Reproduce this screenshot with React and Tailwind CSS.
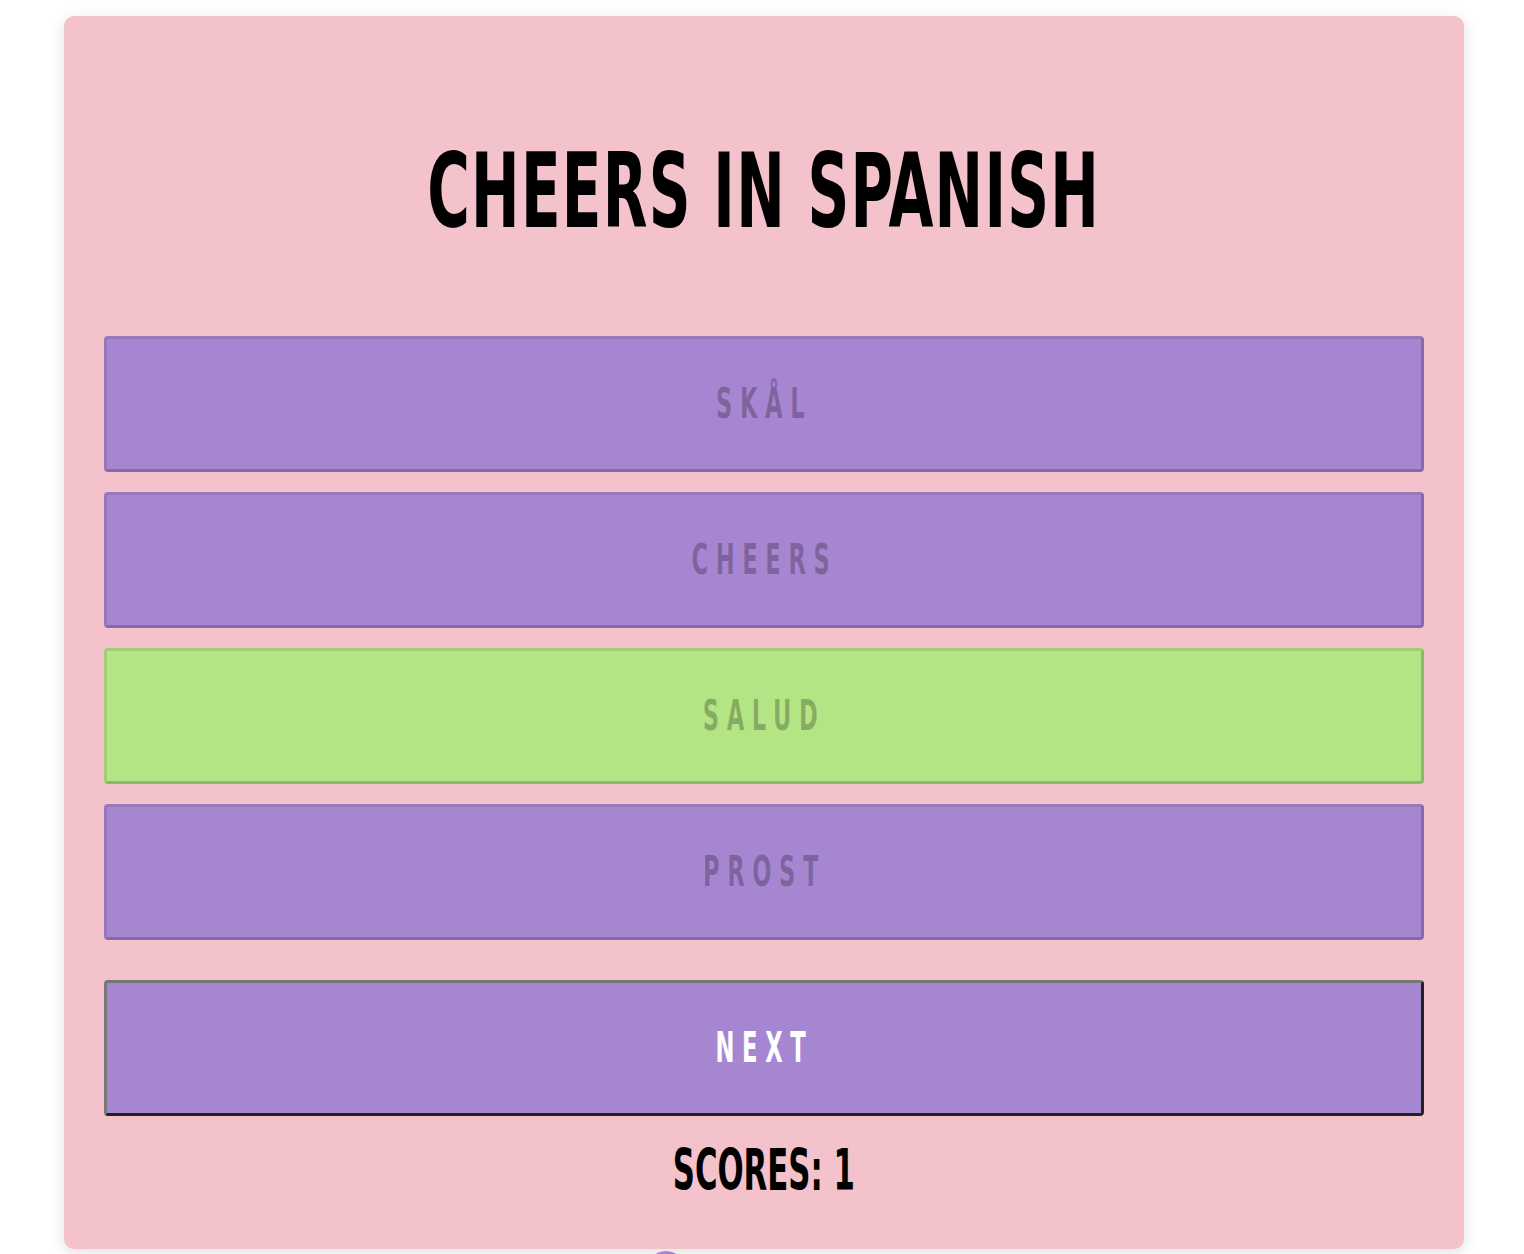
import React, { useState } from 'react';

const options = ['Skål', 'Cheers', 'Salud', 'Prost'];
const correct = 'Salud';

export default function App() {
    const [selected] = useState('Salud');
    const [score] = useState(1);

    return (
        <div className="min-h-screen bg-white pt-4 pl-1 flex flex-col items-center" style={{ fontFamily: '"Liberation Sans Narrow", "DejaVu Sans Condensed", "Liberation Sans", sans-serif' }}>
            <div className="w-[1400px] bg-[#f4c2cb] rounded-[10px] shadow-[0_4px_16px_rgba(0,0,0,0.12)] px-10 pt-10 pb-[50px] flex flex-col">
                {/* Title */}
                <div className="h-[280px] pb-[10px] flex items-center justify-center">
                    <h1 className="text-[104px] leading-none font-bold uppercase text-black scale-x-[0.62] whitespace-nowrap tracking-[0.02em]">
                        Cheers in Spanish
                    </h1>
                </div>

                {/* Options */}
                <div className="flex flex-col gap-5">
                    {options.map((opt) => {
                        const isRight = selected && opt === correct;
                        return (
                            <button
                                key={opt}
                                className={`h-[136px] w-full rounded-[4px] border-[3px] border-t-black/10 border-l-black/10 border-b-black/20 border-r-black/20 flex items-center justify-center ${isRight ? 'bg-[#b4e584]' : 'bg-[#a786d1]'}`}
                            >
                                <span className="text-[42px] leading-none font-bold uppercase text-black/25 tracking-[0.3em] scale-x-[0.6]">
                                    {opt}
                                </span>
                            </button>
                        );
                    })}
                </div>

                {/* Next */}
                <button className="mt-10 h-[136px] w-full rounded-[4px] border-[3px] border-t-[#767676] border-l-[#767676] border-b-[#222] border-r-[#222] bg-[#a786d1] flex items-center justify-center">
                    <span className="text-[42px] leading-none font-bold uppercase text-white tracking-[0.3em] scale-x-[0.6]">
                        Next
                    </span>
                </button>

                {/* Score */}
                <div className="mt-[26px] flex justify-center">
                    <p className="text-[57px] leading-none font-bold uppercase text-black scale-x-[0.6] whitespace-nowrap">
                        Scores: {score}
                    </p>
                </div>
            </div>
            <div className="mt-[2px] ml-[-196px] w-10 h-10 rounded-full bg-[#a786d1]"></div>
        </div>
    );
}
